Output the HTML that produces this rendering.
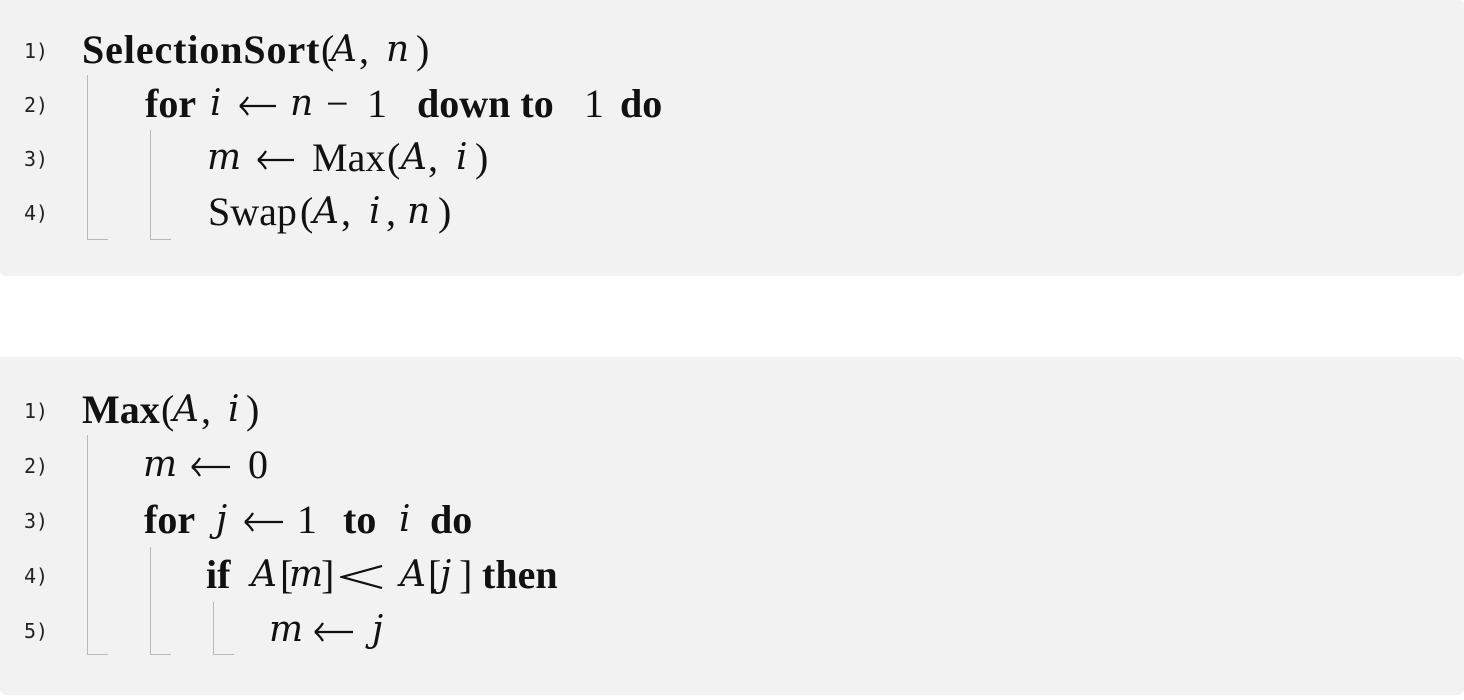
<!DOCTYPE html>
<html><head><meta charset="utf-8"><style>
body{margin:0;width:1464px;height:700px;background:#fff;position:relative;overflow:hidden;font-family:"Liberation Serif",serif;color:#111}
.box{position:absolute;left:0;width:1464px;background:#f2f2f2;border-radius:0 6px 6px 6px}
.n{position:absolute;left:24px;font-family:"DejaVu Sans Mono",monospace;font-size:20px;line-height:30px;color:#222}
.l{position:absolute;left:0;height:44px;width:800px}
.l span{position:absolute;top:0;font-size:40px;line-height:44px;white-space:pre}
.b{font-weight:bold}
.i{font-style:italic;font-family:"DejaVu Serif",serif;font-size:36px !important}
.l svg{position:absolute;top:14px}
.v{position:absolute;width:1px;background:#b8b8b8}
.h{position:absolute;height:1px;background:#b8b8b8;width:21px}
</style></head><body>
<div class="box" style="top:0;height:276px"></div>
<div class="box" style="top:357px;height:338px"></div>

<div class="n" style="top:36px">1)</div>
<div class="l" style="top:28px"><span class="b" style="left:82px;letter-spacing:0.9px">SelectionSort</span><span style="left:321px">(</span><span class="i" style="left:331px">A</span><span style="left:359px">,</span><span class="i" style="left:386px">n</span><span style="left:416px">)</span></div>
<div class="n" style="top:90px">2)</div>
<div class="l" style="top:82px"><span class="b" style="left:145px">for</span><span class="i" style="left:210px">i</span><svg style="left:239px" width="38" height="20" viewBox="0 0 38 20"><path d="M1 10H37M1 10Q6 6 9 1M1 10Q6 14 9 19" stroke="#111" stroke-width="2.2" fill="none"/></svg><span class="i" style="left:290px">n</span><span style="left:326px">−</span><span style="left:367px">1</span><span class="b" style="left:417px">down to</span><span style="left:584px">1</span><span class="b" style="left:620px">do</span></div>
<div class="n" style="top:144px">3)</div>
<div class="l" style="top:136px"><span class="i" style="left:207px">m</span><svg style="left:257px" width="38" height="20" viewBox="0 0 38 20"><path d="M1 10H37M1 10Q6 6 9 1M1 10Q6 14 9 19" stroke="#111" stroke-width="2.2" fill="none"/></svg><span style="left:312px">Max</span><span style="left:387px">(</span><span class="i" style="left:401px">A</span><span style="left:428px">,</span><span class="i" style="left:456px">i</span><span style="left:475px">)</span></div>
<div class="n" style="top:198px">4)</div>
<div class="l" style="top:190px"><span style="left:208px">Swap</span><span style="left:300px">(</span><span class="i" style="left:313px">A</span><span style="left:341px">,</span><span class="i" style="left:369px">i</span><span style="left:386px">,</span><span class="i" style="left:407px">n</span><span style="left:438px">)</span></div>
<div class="v" style="left:87px;top:75px;height:165px"></div><div class="h" style="left:87px;top:239px"></div>
<div class="v" style="left:150px;top:130px;height:110px"></div><div class="h" style="left:150px;top:239px"></div>

<div class="n" style="top:396px">1)</div>
<div class="l" style="top:388px"><span class="b" style="left:82px">Max</span><span style="left:161px">(</span><span class="i" style="left:173px">A</span><span style="left:201px">,</span><span class="i" style="left:228px">i</span><span style="left:246px">)</span></div>
<div class="n" style="top:451px">2)</div>
<div class="l" style="top:443px"><span class="i" style="left:143px">m</span><svg style="left:191px" width="40" height="20" viewBox="0 0 40 20"><path d="M1 10H39M1 10Q6 6 9 1M1 10Q6 14 9 19" stroke="#111" stroke-width="2.2" fill="none"/></svg><span style="left:248px">0</span></div>
<div class="n" style="top:506px">3)</div>
<div class="l" style="top:498px"><span class="b" style="left:144px">for</span><span class="i" style="left:216px">j</span><svg style="left:244px" width="40" height="20" viewBox="0 0 40 20"><path d="M1 10H39M1 10Q6 6 9 1M1 10Q6 14 9 19" stroke="#111" stroke-width="2.2" fill="none"/></svg><span style="left:297px">1</span><span class="b" style="left:343px">to</span><span class="i" style="left:399px">i</span><span class="b" style="left:430px">do</span></div>
<div class="n" style="top:561px">4)</div>
<div class="l" style="top:553px"><span class="b" style="left:206px">if</span><span class="i" style="left:251px">A</span><span style="left:280px">[</span><span class="i" style="left:289px">m</span><span style="left:321px">]</span><svg style="left:340px;top:12px" width="44" height="24" viewBox="0 0 44 24"><path d="M42 1L2 12L42 23" stroke="#111" stroke-width="2.2" fill="none"/></svg><span class="i" style="left:400px">A</span><span style="left:428px">[</span><span class="i" style="left:440px">j</span><span style="left:459px">]</span><span class="b" style="left:482px">then</span></div>
<div class="n" style="top:616px">5)</div>
<div class="l" style="top:608px"><span class="i" style="left:269px">m</span><svg style="left:314px" width="40" height="20" viewBox="0 0 40 20"><path d="M1 10H39M1 10Q6 6 9 1M1 10Q6 14 9 19" stroke="#111" stroke-width="2.2" fill="none"/></svg><span class="i" style="left:372px">j</span></div>
<div class="v" style="left:87px;top:435px;height:220px"></div><div class="h" style="left:87px;top:654px"></div>
<div class="v" style="left:150px;top:547px;height:108px"></div><div class="h" style="left:150px;top:654px"></div>
<div class="v" style="left:213px;top:602px;height:53px"></div><div class="h" style="left:213px;top:654px"></div>
</body></html>
